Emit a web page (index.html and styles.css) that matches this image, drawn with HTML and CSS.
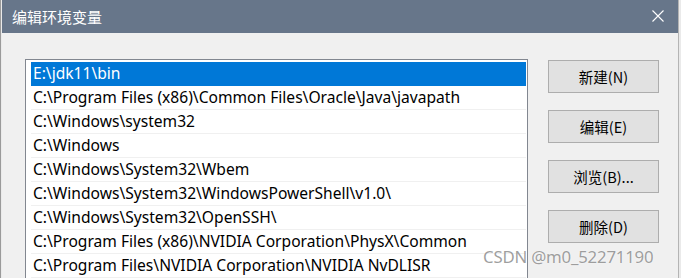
FILE: index.html
```html
<!DOCTYPE html>
<html lang="zh-CN">
<head>
<meta charset="utf-8">
<title>编辑环境变量</title>
<link rel="stylesheet" href="styles.css">
</head>
<body>
<div class="backdrop">
  <div class="dialog">
    <div class="titlebar">
      <span class="title">编辑环境变量</span>
      <svg class="close" width="12" height="12" viewBox="0 0 12 12"><path d="M0.5 0.5L11.5 11.5M11.5 0.5L0.5 11.5" stroke="#fff" stroke-width="1.1" fill="none"/></svg>
    </div>
    <div class="content">
      <div class="list">
        <div class="row selected">E:\jdk11\bin</div>
        <div class="row">C:\Program Files (x86)\Common Files\Oracle\Java\javapath</div>
        <div class="row">C:\Windows\system32</div>
        <div class="row">C:\Windows</div>
        <div class="row">C:\Windows\System32\Wbem</div>
        <div class="row">C:\Windows\System32\WindowsPowerShell\v1.0\</div>
        <div class="row">C:\Windows\System32\OpenSSH\</div>
        <div class="row">C:\Program Files (x86)\NVIDIA Corporation\PhysX\Common</div>
        <div class="row">C:\Program Files\NVIDIA Corporation\NVIDIA NvDLISR</div>
        <div class="row"></div>
      </div>
      <div class="buttons">
        <div class="btn">新建(N)</div>
        <div class="btn">编辑(E)</div>
        <div class="btn">浏览(B)...</div>
        <div class="btn">删除(D)</div>
      </div>
    </div>
  </div>
  <div class="watermark">CSDN @m0_52271190</div>
</div>
</body>
</html>
```

FILE: styles.css
```css
html, body {
  margin: 0;
  padding: 0;
  width: 681px;
  height: 278px;
  overflow: hidden;
  background: #eaeaea;
}
.backdrop {
  position: relative;
  width: 681px;
  height: 278px;
  display: flex;
  padding-left: 1px;
  box-sizing: border-box;
  border-left: 1px solid #9a9a9a;
  overflow: hidden;
  font-family: "Noto Sans", "Noto Sans CJK SC", sans-serif;
}
.dialog {
  width: 676px;
  height: 300px;
  background: #f0f0f0;
  border-right: 1px solid #b4b4b4;
  flex: none;
}
.titlebar {
  height: 33px;
  background: #67768a;
  display: flex;
  align-items: center;
  justify-content: space-between;
  padding: 0 14px 0 10px;
}
.title {
  color: #fff;
  font-family: "Noto Sans CJK SC", sans-serif;
  font-size: 15px;
}
.close {
  display: block;
  margin-top: -2px;
}
.content {
  display: flex;
  padding: 26px 0 0 23px;
  gap: 20px;
}
.list {
  width: 495px;
  height: 240px;
  background: #fff;
  border: 1px solid #828790;
  padding: 2px 1px 0 5px;
  flex: none;
}
.row {
  height: 23px;
  line-height: 23px;
  border-bottom: 1px solid #f0f0f0;
  padding-left: 2px;
  font-size: 15.6px;
  color: #000;
  white-space: nowrap;
  overflow: hidden;
}
.row.selected {
  background: #0078d7;
  color: #fff;
  border-bottom-color: #0078d7;
}
.buttons {
  display: flex;
  flex-direction: column;
  gap: 17px;
  padding-top: 1px;
}
.btn {
  width: 109px;
  height: 31px;
  border: 1px solid #adadad;
  background: #e1e1e1;
  display: flex;
  align-items: center;
  justify-content: center;
  font-family: "Noto Sans CJK SC", sans-serif;
  font-size: 14.5px;
  color: #000;
}
.watermark {
  position: absolute;
  left: 482px;
  top: 245px;
  font-family: "Noto Sans", sans-serif;
  font-size: 16.8px;
  letter-spacing: -0.2px;
  color: rgba(128, 128, 128, 0.75);
  text-shadow: 0 0 2px rgba(255, 255, 255, 0.8);
  white-space: nowrap;
}
```
